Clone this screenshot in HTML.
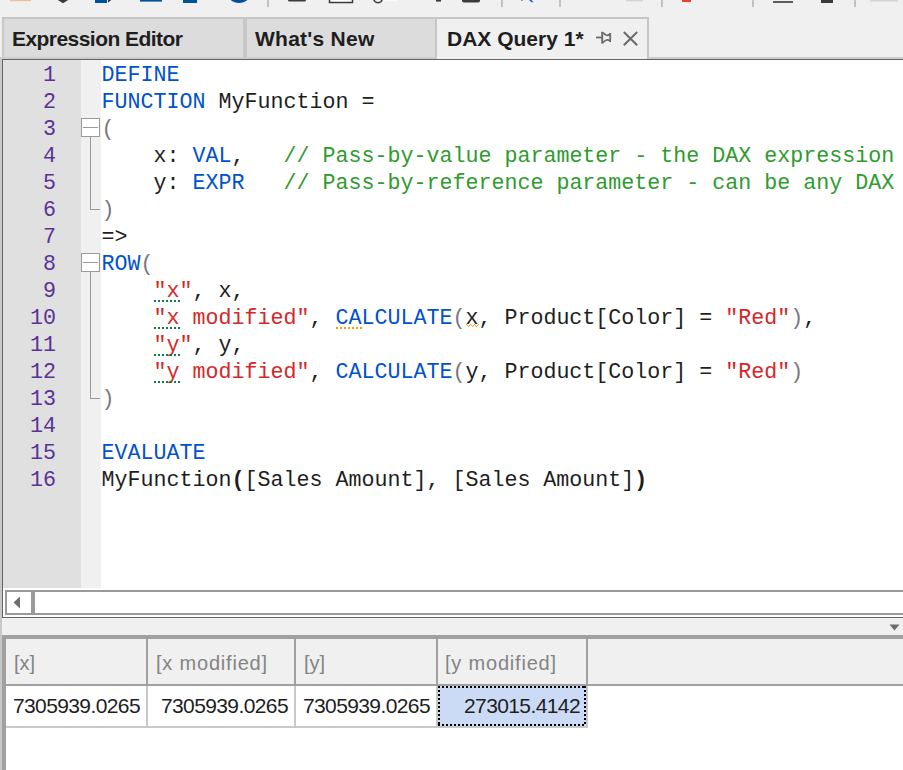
<!DOCTYPE html>
<html><head><meta charset="utf-8">
<style>
*{margin:0;padding:0;box-sizing:border-box}
html,body{width:903px;height:770px;overflow:hidden;background:#f0f0f0;position:relative;font-family:"Liberation Sans",sans-serif}
.a{position:absolute}
.tab{position:absolute;top:17px;height:40px;border:2px solid #c6c6c6;border-bottom:none;background:#dcdcdc;font-weight:bold;font-size:21px;color:#1e1e1e}
.tab span{position:absolute;top:8px;white-space:nowrap}
#ed{position:absolute;left:2px;top:59px;width:901px;height:559px;border:1px solid #646464;border-right:none;background:#fff;overflow:hidden}
#gut{position:absolute;left:0;top:0;width:78px;height:528px;background:#e0e0e0}
#fold{position:absolute;left:78px;top:0;width:20px;height:528px;background:#f0f0f0}
.ln{position:absolute;left:0;width:53px;margin-top:2px;text-align:right;font-family:"Liberation Mono",monospace;font-size:21.663px;line-height:27px;color:#5a3296}
.cl{position:absolute;left:98.5px;margin-top:2px;font-family:"Liberation Mono",monospace;font-size:21.663px;line-height:27px;color:#1e1e1e;white-space:pre}
.dg{position:absolute;left:151px;width:28px;height:2px;background:repeating-linear-gradient(90deg,#107c41 0 2px,transparent 2px 4px)}.do{position:absolute;width:28px;height:2px;background:repeating-linear-gradient(90deg,#ff9c00 0 2px,transparent 2px 4px)}
.hd{position:absolute;top:651px;font-size:20px;line-height:24px;color:#848484;white-space:nowrap}.vl{position:absolute;top:694px;font-size:21px;letter-spacing:-0.6px;line-height:24px;color:#1e1e1e;text-align:right;white-space:nowrap}
.k{color:#0052cc}.c{color:#2e9b2e}.s{color:#d42828}.p{color:#7a7680}
</style></head><body>
<!-- toolbar fragments -->
<svg class="a" style="left:0;top:0" width="903" height="10">
<rect x="10" y="0" width="21" height="1.2" fill="#e8c48c"/>
<polygon points="55.5,-1.5 63,3.3 70.5,-1.5" fill="#3a3a3a"/>
<rect x="95" y="0" width="12" height="3" fill="#0050a0"/>
<polygon points="108,2.8 112.5,-1 108,-1" fill="#3a3a3a"/>
<rect x="140" y="0" width="22" height="1.6" fill="#0050a0"/>
<rect x="183" y="0" width="14" height="3" fill="#0050a0"/>
<ellipse cx="239" cy="-4" rx="10" ry="7.1" fill="#0050a0"/>
<rect x="267" y="0" width="2" height="7" fill="#c2c2c2"/>
<rect x="288" y="-3" width="18" height="4.6" rx="1.5" fill="#3a3a3a"/>
<rect x="329.5" y="-3" width="23" height="5.5" fill="#fff" stroke="#3a3a3a" stroke-width="1.5"/>
<rect x="383" y="0" width="15" height="1.2" fill="#fafafa"/>
<circle cx="378" cy="-1.6" r="4.3" fill="none" stroke="#3a3a3a" stroke-width="1.6"/>
<rect x="436" y="0" width="5" height="1.6" fill="#3a3a3a"/>
<rect x="462" y="-3" width="18" height="5.6" rx="2" fill="#3a3a3a"/>
<rect x="501" y="0" width="2" height="7" fill="#c2c2c2"/>
<rect x="521" y="0" width="2" height="1" fill="#9a9a9a"/>
<polygon points="528,-1 530.5,-1 533.5,2.3 531.5,2.3" fill="#0066cc"/>
<rect x="559" y="0" width="2" height="7" fill="#c2c2c2"/>
<rect x="626" y="0" width="17" height="1.4" fill="#d4d4d4"/>
<rect x="661" y="0" width="2" height="7" fill="#c2c2c2"/>
<rect x="682" y="0" width="9" height="2" fill="#e8402a"/>
<rect x="752" y="0" width="2" height="7" fill="#c2c2c2"/>
<rect x="773" y="1.2" width="20" height="1.6" fill="#3a3a3a"/>
<rect x="821" y="0" width="12" height="3" fill="#3a3a3a"/>
<rect x="854" y="0" width="2" height="7" fill="#c2c2c2"/>
<rect x="870" y="0" width="28" height="1.5" fill="#d4d4d4"/>
</svg>
<!-- tabs -->
<div class="tab" style="left:2px;width:243px"><span style="left:8px;letter-spacing:-0.55px">Expression Editor</span></div>
<div class="tab" style="left:245px;width:192px"><span style="left:8px;letter-spacing:0.25px">What's New</span></div>
<div class="tab" style="left:437px;width:212px;height:42px;background:#f0f0f0;border-left:none"><span style="left:10px">DAX Query 1*</span></div>
<svg class="a" style="left:590px;top:25px" width="55" height="28" viewBox="590 25 55 28">
<g stroke="#6b6b6b" fill="none">
<path d="M596,37.5 H602" stroke-width="1.8"/>
<path d="M602.2,31.8 V43.6" stroke-width="2"/>
<path d="M610.2,33 V42" stroke-width="1.8"/>
<path d="M603,32.6 Q606.5,37.2 610,34" stroke-width="1.7"/>
<path d="M603,42.8 Q606.5,38.2 610,41" stroke-width="1.7"/>
<path d="M623.8,32 L637.2,45.2 M637.2,32 L623.8,45.2" stroke-width="2"/>
</g></svg>
<!-- pane borders -->
<div class="a" style="left:0;top:57px;width:437px;height:2px;background:#cccccc"></div>
<div class="a" style="left:649px;top:57px;width:254px;height:2px;background:#cccccc"></div>
<div class="a" style="left:0;top:57px;width:2px;height:713px;background:#c8c8c8"></div>

<div id="ed">
<div id="gut"></div><div id="fold"></div>
<div class="ln" style="top:0">1</div>
<div class="ln" style="top:27px">2</div>
<div class="ln" style="top:54px">3</div>
<div class="ln" style="top:81px">4</div>
<div class="ln" style="top:108px">5</div>
<div class="ln" style="top:135px">6</div>
<div class="ln" style="top:162px">7</div>
<div class="ln" style="top:189px">8</div>
<div class="ln" style="top:216px">9</div>
<div class="ln" style="top:243px">10</div>
<div class="ln" style="top:270px">11</div>
<div class="ln" style="top:297px">12</div>
<div class="ln" style="top:324px">13</div>
<div class="ln" style="top:351px">14</div>
<div class="ln" style="top:378px">15</div>
<div class="ln" style="top:405px">16</div>

<div class="cl" style="top:0"><span class="k">DEFINE</span></div>
<div class="cl" style="top:27px"><span class="k">FUNCTION</span> MyFunction =</div>
<div class="cl" style="top:54px"><span class="p">(</span></div>
<div class="cl" style="top:81px">    x: <span class="k">VAL</span>,   <span class="c">// Pass-by-value parameter - the DAX expression</span></div>
<div class="cl" style="top:108px">    y: <span class="k">EXPR</span>   <span class="c">// Pass-by-reference parameter - can be any DAX</span></div>
<div class="cl" style="top:135px"><span class="p">)</span></div>
<div class="cl" style="top:162px">=&gt;</div>
<div class="cl" style="top:189px"><span class="k">ROW</span><span class="p">(</span></div>
<div class="cl" style="top:216px">    <span class="s">"x"</span>, x,</div>
<div class="cl" style="top:243px">    <span class="s">"x modified"</span>, <span class="k">CALCULATE</span><span class="p">(</span>x, Product[Color] = <span class="s">"Red"</span><span class="p">)</span>,</div>
<div class="cl" style="top:270px">    <span class="s">"y"</span>, y,</div>
<div class="cl" style="top:297px">    <span class="s">"y modified"</span>, <span class="k">CALCULATE</span><span class="p">(</span>y, Product[Color] = <span class="s">"Red"</span><span class="p">)</span></div>
<div class="cl" style="top:324px"><span class="p">)</span></div>
<div class="cl" style="top:378px"><span class="k">EVALUATE</span></div>

<!-- fold markers -->
<div class="a" style="left:78px;top:58px;width:19px;height:19px;border:1px solid #9a9a9a;background:#fff"></div>
<div class="a" style="left:80px;top:67px;width:15px;height:1px;background:#9a9a9a"></div>
<div class="a" style="left:87px;top:77px;width:1px;height:73px;background:#9a9a9a"></div>
<div class="a" style="left:87px;top:149px;width:10px;height:1px;background:#9a9a9a"></div>
<div class="a" style="left:78px;top:193px;width:19px;height:19px;border:1px solid #9a9a9a;background:#fff"></div>
<div class="a" style="left:80px;top:202px;width:15px;height:1px;background:#9a9a9a"></div>
<div class="a" style="left:87px;top:212px;width:1px;height:127px;background:#9a9a9a"></div>
<div class="a" style="left:87px;top:338px;width:10px;height:1px;background:#9a9a9a"></div>
<!-- underlines -->
<div class="dg" style="top:240px"></div>
<div class="dg" style="top:267px"></div>
<div class="dg" style="top:294px"></div>
<div class="dg" style="top:321px"></div>
<div class="do" style="left:333px;top:267px"></div>
<svg class="a" style="left:463px;top:264px" width="13" height="3" shape-rendering="crispEdges"><g fill="#ffa200"><rect x="0" y="0" width="1" height="1"/><rect x="1" y="1" width="1" height="1"/><rect x="2" y="2" width="1" height="1"/><rect x="3" y="1" width="1" height="1"/><rect x="4" y="0" width="1" height="1"/><rect x="5" y="1" width="1" height="1"/><rect x="6" y="2" width="1" height="1"/><rect x="7" y="1" width="1" height="1"/><rect x="8" y="0" width="1" height="1"/><rect x="9" y="1" width="1" height="1"/><rect x="10" y="2" width="1" height="1"/><rect x="11" y="1" width="1" height="1"/><rect x="12" y="0" width="1" height="1"/></g></svg>
<!-- h scrollbar -->
<div class="a" style="left:2px;top:530px;width:910px;height:25px;border:2px solid #9a9a9a;background:#fff"></div>
<div class="a" style="left:28px;top:530px;width:4px;height:25px;background:#9a9a9a"></div>
<svg class="a" style="left:10px;top:536px" width="8" height="14"><polygon points="0.5,6.5 7,0.5 7,12.5" fill="#6d6d6d"/></svg>
<div class="cl" style="top:405px">MyFunction<b>(</b>[Sales Amount], [Sales Amount]<b>)</b></div>
</div>


<!-- dropdown arrow -->
<svg class="a" style="left:889px;top:624px" width="11" height="7"><polygon points="0.5,0.5 10.5,0.5 5.5,6.5" fill="#6d6d6d"/></svg>
<!-- results grid -->
<div class="a" style="left:2px;top:635px;width:901px;height:4px;background:#a0a0a0"></div>
<div class="a" style="left:2px;top:635px;width:4px;height:135px;background:#a0a0a0"></div>
<div class="a" style="left:6px;top:639px;width:897px;height:45px;background:#f0f0f0"></div>
<div class="a" style="left:6px;top:684px;width:897px;height:2px;background:#a0a0a0"></div>
<div class="a" style="left:6px;top:686px;width:897px;height:84px;background:#fff"></div>
<div class="a" style="left:146px;top:639px;width:2px;height:45px;background:#a0a0a0"></div>
<div class="a" style="left:294px;top:639px;width:2px;height:45px;background:#a0a0a0"></div>
<div class="a" style="left:436px;top:639px;width:2px;height:45px;background:#a0a0a0"></div>
<div class="a" style="left:586px;top:639px;width:2px;height:45px;background:#a0a0a0"></div>
<div class="a" style="left:146px;top:686px;width:2px;height:40px;background:#c8c8c8"></div>
<div class="a" style="left:294px;top:686px;width:2px;height:40px;background:#c8c8c8"></div>
<div class="a" style="left:436px;top:686px;width:2px;height:40px;background:#c8c8c8"></div>
<div class="a" style="left:586px;top:686px;width:2px;height:42px;background:#c8c8c8"></div>
<div class="a" style="left:6px;top:726px;width:582px;height:2px;background:#c8c8c8"></div>
<div class="a" style="left:438px;top:686px;width:148px;height:40px;background:#ccdbf5"></div>
<div class="a" style="left:438px;top:686px;width:148px;height:2px;background:repeating-linear-gradient(90deg,#000 0 2px,transparent 2px 4px)"></div>
<div class="a" style="left:438px;top:724px;width:148px;height:2px;background:repeating-linear-gradient(90deg,#000 0 2px,transparent 2px 4px)"></div>
<div class="a" style="left:438px;top:686px;width:2px;height:40px;background:repeating-linear-gradient(180deg,#000 0 2px,transparent 2px 4px)"></div>
<div class="a" style="left:584px;top:686px;width:2px;height:40px;background:repeating-linear-gradient(180deg,#000 0 2px,transparent 2px 4px)"></div>
<div class="hd" style="left:14px">[x]</div>
<div class="hd" style="left:156px;letter-spacing:0.8px">[x modified]</div>
<div class="hd" style="left:304px">[y]</div>
<div class="hd" style="left:445px;letter-spacing:0.8px">[y modified]</div>
<div class="vl" style="left:6px;width:134px">7305939.0265</div>
<div class="vl" style="left:148px;width:140px">7305939.0265</div>
<div class="vl" style="left:296px;width:134px">7305939.0265</div>
<div class="vl" style="left:438px;width:142px">273015.4142</div>
</body></html>
